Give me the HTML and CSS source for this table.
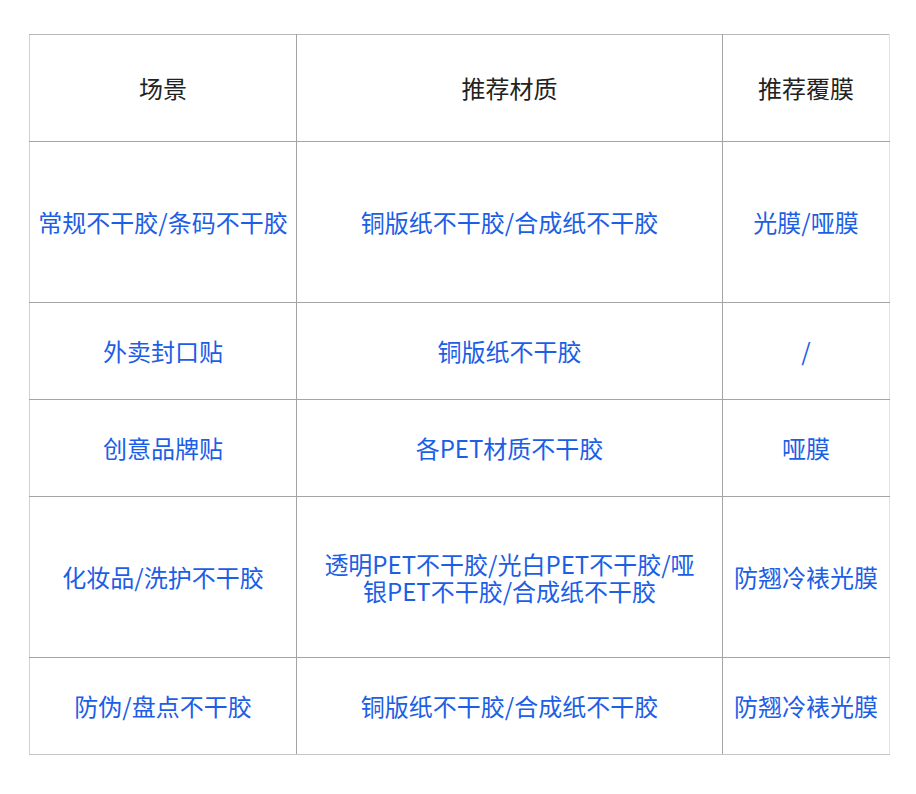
FILE: index.html
```html
<!DOCTYPE html>
<html lang="zh-CN">
<head>
<meta charset="utf-8">
<link rel="stylesheet" href="styles.css">
</head>
<body>
<div class="page">
<table class="spec">
<colgroup><col class="c1"><col class="c2"><col class="c3"></colgroup>
<tr class="head"><th>场景</th><th>推荐材质</th><th>推荐覆膜</th></tr>
<tr class="tall"><td>常规不干胶/条码不干胶</td><td>铜版纸不干胶/合成纸不干胶</td><td>光膜/哑膜</td></tr>
<tr class="short"><td>外卖封口贴</td><td>铜版纸不干胶</td><td>/</td></tr>
<tr class="short"><td>创意品牌贴</td><td>各PET材质不干胶</td><td>哑膜</td></tr>
<tr class="tall"><td>化妆品/洗护不干胶</td><td class="multi">透明PET不干胶/光白PET不干胶/哑<br>银PET不干胶/合成纸不干胶</td><td>防翘冷裱光膜</td></tr>
<tr class="short"><td>防伪/盘点不干胶</td><td>铜版纸不干胶/合成纸不干胶</td><td>防翘冷裱光膜</td></tr>
</table>
</div>
</body>
</html>
```
FILE: styles.css
```css
html, body { margin: 0; padding: 0; background: #fff; }
.page { padding: 34px 0 0 29px; }
.spec {
  border-collapse: collapse;
  table-layout: fixed;
  width: 860px;
  font-family: "Noto Sans CJK SC", "Noto Sans", sans-serif;
  font-size: 24px;
  line-height: 26px;
  border: 1px solid #d0d0d0;
}
.c1 { width: 267px; }
.c2 { width: 426px; }
.c3 { width: 167px; }
.spec th, .spec td {
  border: 1px solid #a4a4a4;
  text-align: center;
  vertical-align: middle;
  padding: 0 4px;
}
.spec tr:first-child th { border-top-color: #b8b8b8; }
.spec tr > :first-child { border-left-color: #d0d0d0; }
.spec tr > :last-child { border-right-color: #e2e2e2; }
.spec tr:last-child td { border-bottom-color: #c4c4c4; }
.spec th { font-weight: normal; color: #222; }
.spec td { color: #1c5ee6; }
.spec td.multi { line-height: 27px; }
.head { height: 107px; }
.tall { height: 161px; }
.short { height: 97px; }
```
